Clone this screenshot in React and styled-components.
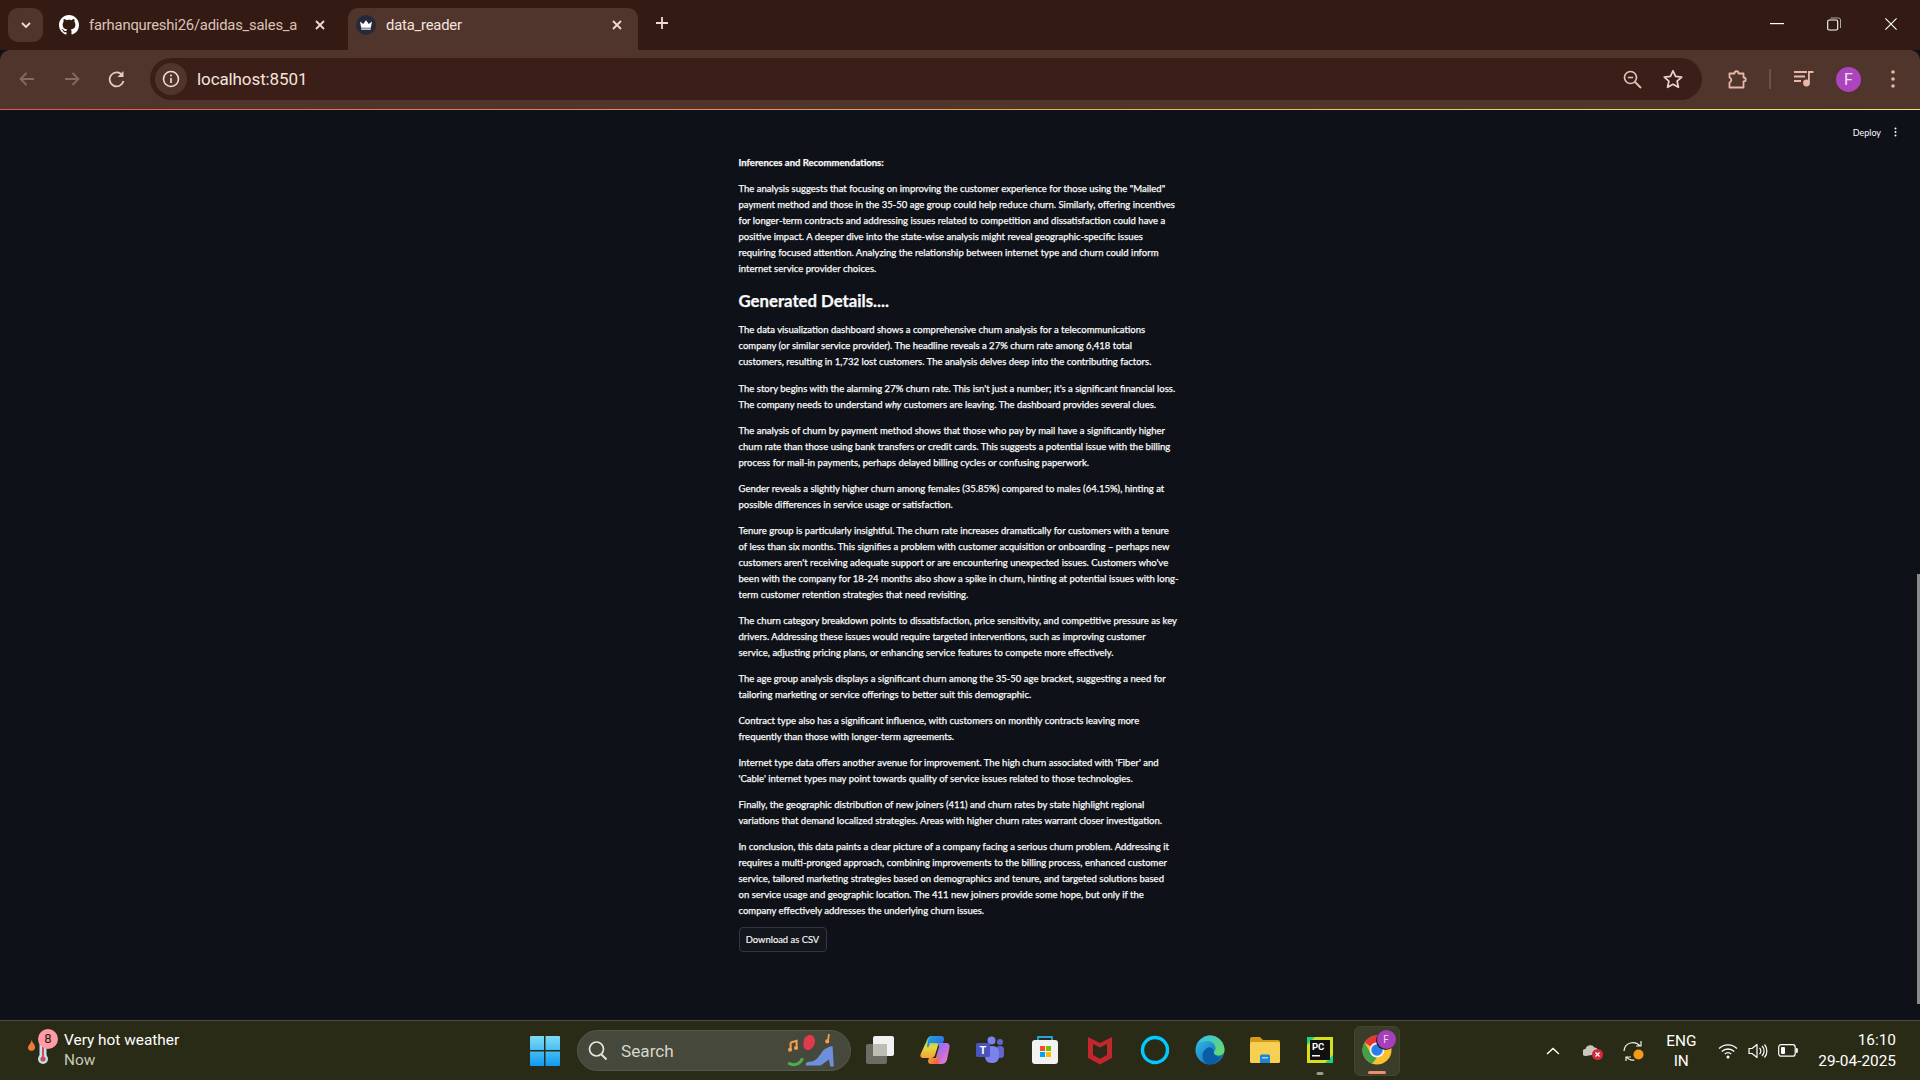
import React from "react";
import styled, { createGlobalStyle } from "styled-components";

const Global = createGlobalStyle`
  html, body { margin: 0; padding: 0; background: #0e1117; overflow: hidden; }
  * { box-sizing: border-box; }
`;

const UI = `"Open Sans", "Noto Sans", Arial, sans-serif`;
const SEG = `"Open Sans", "Noto Sans", sans-serif`;

const Screen = styled.div`
  width: 1920px; height: 1080px; display: flex; flex-direction: column;
  position: relative; overflow: hidden; font-family: ${UI};
`;
const TabStrip = styled.div`
  height: 50px; background: #331a13; display: flex; align-items: flex-start; padding: 8px 0 0 8px; flex: none;
`;
const TabSearch = styled.div`
  width: 35px; height: 34px; border-radius: 10px; background: #50352d; display: flex; align-items: center; justify-content: center; margin-right: 5px;
`;
const Tab = styled.div`
  width: ${p => p.$w}px; height: 42px; display: flex; align-items: center; gap: 10px; padding: 0 0 8px ${p => p.$pl}px;
  border-radius: 10px 10px 0 0; background: ${p => p.$active ? "#50352d" : "transparent"};
  color: ${p => p.$active ? "#f3e4de" : "#dcc3ba"}; position: relative; letter-spacing: -0.2px;
`;
const TabLabel = styled.span`
  flex: 1; white-space: nowrap; font-family: "Roboto", sans-serif; font-size: 14.8px; margin-right: 4px;
`;
const TabClose = styled.span`
  width: 14px; height: 14px; margin-right: ${p => p.$mr}px; display: flex; align-items: center; justify-content: center; flex: none;
`;
const NewTab = styled.div`
  width: 20px; height: 20px; margin: 7px 0 0 16px; display: flex;
`;
const WindowControls = styled.div`
  margin-left: auto; display: flex; align-items: center; gap: 43px; padding: 9px 22px 0 0;
`;
const Toolbar = styled.div`
  height: 59px; background: #50352d; border-radius: 10px 10px 0 0; display: flex; align-items: center; flex: none; padding: 0 0 1px 17px;
`;
const NavIcon = styled.div`
  width: 20px; height: 20px; margin-right: ${p => p.$mr}px; display: flex;
`;
const Omnibox = styled.div`
  width: 1552px; height: 42px; background: #3a1e17; border-radius: 21px; display: flex; align-items: center; padding: 0 0 0 5px;
`;
const InfoBubble = styled.div`
  width: 32px; height: 32px; border-radius: 50%; background: #50352d; display: flex; align-items: center; justify-content: center; margin-right: 10px;
`;
const Url = styled.div`
  flex: 1; color: #f3e4de; font-family: "Roboto", sans-serif; font-size: 17px; letter-spacing: -0.1px;
`;
const OmniIcons = styled.div`
  display: flex; align-items: center; gap: 20px; padding-right: 18px;
`;
const ToolRight = styled.div`
  display: flex; align-items: center; margin-left: 23.5px;
`;
const ToolSep = styled.div`
  width: 2px; height: 20px; background: #6d4f46; margin: 0 23px 0 21.5px;
`;
const Avatar = styled.div`
  width: 25px; height: 25px; border-radius: 50%; background: #ac44bd; color: #f2e0f4; font-size: 16px; display: flex; align-items: center; justify-content: center; margin: 0 30px 0 22px; font-family: "Roboto", sans-serif;
`;
const Gradient = styled.div`
  height: 1px; flex: none; background: linear-gradient(90deg, #e2574c 0%, #e88a55 35%, #eec170 70%, #f3dc85 100%);
`;
const Page = styled.main`
  flex: 1; background: #0e1117; color: #fafafa; display: flex; justify-content: center; padding: 45.1px 3px 0 0; position: relative; min-height: 0;
`;
const Column = styled.article`
  width: 440px; font-family: "Lato", sans-serif; font-size: 9.52px; line-height: 16px; -webkit-text-stroke: 0.25px #fafafa;
`;
const P = styled.p`
  margin: 0 0 10.1px; white-space: nowrap;
`;
const H3 = styled.h3`
  margin: 9px 0 7.2px; font-size: 16.75px; line-height: 28px; font-weight: 700; font-family: "Lato", sans-serif;
`;
const Download = styled.button`
  display: block; width: 88px; height: 25px; margin-top: -3px; padding: 0; background: #13161d; border: 1px solid #33363f; border-radius: 4px; color: #fafafa; font-family: "Lato", sans-serif; font-size: 9.4px; -webkit-text-stroke: 0.15px #fafafa;
`;
const Header = styled.div`
  position: absolute; top: 14px; right: 23px; display: flex; align-items: center; gap: 13px; font-family: "Lato", sans-serif; font-size: 9px; color: #fafafa; height: 16px;
`;
const Thumb = styled.div`
  position: absolute; right: 0; top: 464px; width: 3px; height: 430px; background: #8a8a8a;
`;
const Taskbar = styled.footer`
  height: 60px; flex: none; background: #2a2b17; border-top: 1px solid #4b4d3c; display: flex; align-items: center; position: relative; font-family: ${SEG};
`;
const Weather = styled.div`
  display: flex; align-items: center; width: 525px; padding-left: 25px; gap: 2px; color: #fff;
`;
const WeatherIcon = styled.div`
  width: 36px; height: 44px; position: relative; flex: none;
`;
const Badge = styled.span`
  position: absolute; left: 13px; top: 0; width: 20px; height: 20px; border-radius: 50%; background: #ff9aa6; color: #1b1b1b; font-size: 13px; display: flex; align-items: center; justify-content: center; font-family: "Roboto", sans-serif;
`;
const WeatherText = styled.div`
  display: flex; flex-direction: column; font-size: 15.4px; line-height: 20px; font-family: "Roboto", sans-serif; margin: -2px 0 0 1px; white-space: nowrap;
`;
const WeatherSub = styled.span`
  color: #c9cabb;
`;
const WinStart = styled.div`
  width: 45px; display: flex; justify-content: center; margin-right: 10px; margin-left: -3px;
`;
const SearchBox = styled.div`
  width: 274px; height: 41px; border-radius: 21px; background: #45483a; border: 1px solid #55574a; display: flex; align-items: center; padding: 0 11px 0 9px; margin-right: 1.5px; color: #d6d7cb; font-family: "Roboto", sans-serif; font-size: 17.2px;
`;
const SearchLabel = styled.span`
  margin-left: 12px; flex: 1;
`;
const AppSlot = styled.div`
  height: 50px; display: flex; align-items: center; justify-content: center; position: relative; border-radius: 6px; padding-bottom: 2px;
  background: ${p => p.$on ? "#3b3d2b" : "transparent"}; border: ${p => p.$on ? "1px solid #43452f" : "none"};
  width: ${p => p.$on ? 46 : 55}px; margin-left: ${p => p.$on ? 6 : 0}px;
`;
const RunDot = styled.span`
  position: absolute; bottom: 1px; left: 50%; transform: translateX(-50%); height: 3px; border-radius: 2px;
  width: ${p => p.$w}px; background: ${p => p.$c};
`;
const Tray = styled.div`
  margin-left: auto; display: flex; align-items: center; padding-right: 24px; color: #fff;
`;
const TrayItem = styled.div`
  display: flex; align-items: center; justify-content: center; margin-left: ${p => p.$ml}px; width: ${p => p.$w}px;
`;
const Lang = styled.div`
  text-align: center; font-size: 15.4px; line-height: 20px; font-family: "Roboto", sans-serif; width: 38px; margin-left: 17.6px;
`;
const Clock = styled.div`
  text-align: right; font-size: 15.4px; line-height: 21px; font-family: "Roboto", sans-serif; margin-left: 20px; white-space: nowrap;
`;
const ProfileBadge = styled.span`
  position: absolute; right: 3px; top: 3px; width: 19px; height: 19px; border-radius: 50%; background: #a640ba; color: #f0d8f3; font-size: 10px; display: flex; align-items: center; justify-content: center; box-shadow: -1px 1px 0 #222; font-family: "Roboto", sans-serif;
`;

const Svg = ({ s = 20, children }) => (
  <svg width={s} height={s} viewBox={`0 0 ${s} ${s}`} fill="none">{children}</svg>
);

const GitHub = () => (
  <svg width="20" height="20" viewBox="0 0 16 16" fill="#fff"><path d="M8 0C3.58 0 0 3.58 0 8c0 3.54 2.29 6.53 5.47 7.59.4.07.55-.17.55-.38 0-.19-.01-.82-.01-1.49-2.01.37-2.53-.49-2.69-.94-.09-.23-.48-.94-.82-1.13-.28-.15-.68-.52-.01-.53.63-.01 1.08.58 1.23.82.72 1.21 1.87.87 2.33.66.07-.52.28-.87.51-1.07-1.78-.2-3.64-.89-3.64-3.95 0-.87.31-1.59.82-2.15-.08-.2-.36-1.02.08-2.12 0 0 .67-.21 2.2.82.64-.18 1.32-.27 2-.27s1.36.09 2 .27c1.53-1.04 2.2-.82 2.2-.82.44 1.1.16 1.92.08 2.12.51.56.82 1.27.82 2.15 0 3.07-1.87 3.75-3.65 3.95.29.25.54.73.54 1.48 0 1.07-.01 1.93-.01 2.2 0 .21.15.46.55.38A8.01 8.01 0 0016 8c0-4.42-3.58-8-8-8z"/></svg>
);
const Crown = () => (
  <Svg s={20}><circle cx="10" cy="10" r="10" fill="#262a38"/><path d="M4 6.5l3.2 2.4L10 5.2l2.800 3.700L16 6.500l-1.200 6.300H5.200z" fill="#fff"/><rect x="5.200" y="13.400" width="9.600" height="1.400" fill="#ddd"/></Svg>
);
const X = ({ c = "#f0dcd5", s = 10, sw = 1.8 }) => (
  <svg width={s} height={s} viewBox="0 0 10 10"><path d="M1 1l8 8M9 1l-8 8" stroke={c} strokeWidth={sw}/></svg>
);

const Streamlit = () => (
  <Page>
    <Column>
      <P><strong>Inferences and Recommendations:</strong></P>
      <P>The analysis suggests that focusing on improving the customer experience for those using the "Mailed"<br/>payment method and those in the 35-50 age group could help reduce churn. Similarly, offering incentives<br/>for longer-term contracts and addressing issues related to competition and dissatisfaction could have a<br/>positive impact. A deeper dive into the state-wise analysis might reveal geographic-specific issues<br/>requiring focused attention. Analyzing the relationship between internet type and churn could inform<br/>internet service provider choices.</P>
      <H3>Generated Details....</H3>
      <P>The data visualization dashboard shows a comprehensive churn analysis for a telecommunications<br/>company (or similar service provider). The headline reveals a 27% churn rate among 6,418 total<br/>customers, resulting in 1,732 lost customers. The analysis delves deep into the contributing factors.</P>
      <P>The story begins with the alarming 27% churn rate. This isn't just a number; it's a significant financial loss.<br/>The company needs to understand <em>why</em> customers are leaving. The dashboard provides several clues.</P>
      <P>The analysis of churn by payment method shows that those who pay by mail have a significantly higher<br/>churn rate than those using bank transfers or credit cards. This suggests a potential issue with the billing<br/>process for mail-in payments, perhaps delayed billing cycles or confusing paperwork.</P>
      <P>Gender reveals a slightly higher churn among females (35.85%) compared to males (64.15%), hinting at<br/>possible differences in service usage or satisfaction.</P>
      <P>Tenure group is particularly insightful. The churn rate increases dramatically for customers with a tenure<br/>of less than six months. This signifies a problem with customer acquisition or onboarding – perhaps new<br/>customers aren't receiving adequate support or are encountering unexpected issues. Customers who've<br/>been with the company for 18-24 months also show a spike in churn, hinting at potential issues with long-<br/>term customer retention strategies that need revisiting.</P>
      <P>The churn category breakdown points to dissatisfaction, price sensitivity, and competitive pressure as key<br/>drivers. Addressing these issues would require targeted interventions, such as improving customer<br/>service, adjusting pricing plans, or enhancing service features to compete more effectively.</P>
      <P>The age group analysis displays a significant churn among the 35-50 age bracket, suggesting a need for<br/>tailoring marketing or service offerings to better suit this demographic.</P>
      <P>Contract type also has a significant influence, with customers on monthly contracts leaving more<br/>frequently than those with longer-term agreements.</P>
      <P>Internet type data offers another avenue for improvement. The high churn associated with 'Fiber' and<br/>'Cable' internet types may point towards quality of service issues related to those technologies.</P>
      <P>Finally, the geographic distribution of new joiners (411) and churn rates by state highlight regional<br/>variations that demand localized strategies. Areas with higher churn rates warrant closer investigation.</P>
      <P>In conclusion, this data paints a clear picture of a company facing a serious churn problem. Addressing it<br/>requires a multi-pronged approach, combining improvements to the billing process, enhanced customer<br/>service, tailored marketing strategies based on demographics and tenure, and targeted solutions based<br/>on service usage and geographic location. The 411 new joiners provide some hope, but only if the<br/>company effectively addresses the underlying churn issues.</P>
      <Download>Download as CSV</Download>
    </Column>
    <Header>
      <span>Deploy</span>
      <svg width="3" height="10" viewBox="0 0 3 10" fill="#fafafa"><circle cx="1.5" cy="1.5" r="1"/><circle cx="1.5" cy="5" r="1"/><circle cx="1.5" cy="8.5" r="1"/></svg>
    </Header>
    <Thumb />
  </Page>
);

const Chrome = () => (
  <>
    <TabStrip>
      <TabSearch>
        <svg width="10" height="7" viewBox="0 0 10 7"><path d="M1 1l4 4 4-4" stroke="#f0dcd5" strokeWidth="1.8" fill="none"/></svg>
      </TabSearch>
      <Tab $w={300} $pl={11}>
        <GitHub />
        <TabLabel>farhanqureshi26/adidas_sales_a</TabLabel>
        <TabClose $mr={21}><X /></TabClose>
      </Tab>
      <Tab $active $w={290} $pl={8}>
        <Crown />
        <TabLabel>data_reader</TabLabel>
        <TabClose $mr={14}><X /></TabClose>
      </Tab>
      <NewTab>
        <svg width="16" height="16" viewBox="0 0 16 16"><path d="M8 2v12M2 8h12" stroke="#f0dcd5" strokeWidth="1.8"/></svg>
      </NewTab>
      <WindowControls>
        <svg width="14" height="2" viewBox="0 0 14 2"><rect width="14" height="1.2" fill="#fff"/></svg>
        <svg width="14" height="14" viewBox="0 0 14 14" fill="none"><rect x=".7" y="3" width="10" height="10" rx="1.5" stroke="#fff" strokeWidth="1.1"/><path d="M3.5 1h8a2 2 0 012 2v8" stroke="#aaa" strokeWidth="1"/></svg>
        <X c="#fff" s={14} sw={0.8} />
      </WindowControls>
    </TabStrip>
    <Toolbar>
      <NavIcon $mr={25}>
        <svg width="20" height="20" viewBox="0 0 20 20" fill="none"><path d="M17 10H4M9.5 4L3.5 10l6 6" stroke="#846a61" strokeWidth="1.8"/></svg>
      </NavIcon>
      <NavIcon $mr={25}>
        <svg width="20" height="20" viewBox="0 0 20 20" fill="none"><path d="M3 10h13M10.5 4l6 6-6 6" stroke="#846a61" strokeWidth="1.8"/></svg>
      </NavIcon>
      <NavIcon $mr={23}>
        <svg width="20" height="20" viewBox="0 0 20 20" fill="none"><path d="M15.5 6.5A7 7 0 1016.5 12" stroke="#e8c9bd" strokeWidth="1.8"/><path d="M16.5 2v6h-6z" fill="#e8c9bd"/></svg>
      </NavIcon>
      <Omnibox>
        <InfoBubble>
          <svg width="18" height="18" viewBox="0 0 18 18" fill="none"><circle cx="9" cy="9" r="7.5" stroke="#f0dcd5" strokeWidth="1.6"/><path d="M9 8v5" stroke="#f0dcd5" strokeWidth="1.7"/><circle cx="9" cy="5.5" r="1" fill="#f0dcd5"/></svg>
        </InfoBubble>
        <Url>localhost:8501</Url>
        <OmniIcons>
          <svg width="19" height="19" viewBox="0 0 19 19" fill="none"><circle cx="7.5" cy="7.5" r="6" stroke="#dcc3ba" strokeWidth="1.7"/><path d="M12 12l6 6" stroke="#dcc3ba" strokeWidth="1.9"/><path d="M4.8 7.5h5.4" stroke="#dcc3ba" strokeWidth="1.6"/></svg>
          <svg width="22" height="22" viewBox="0 0 24 24" fill="none"><path d="M12 3l2.8 6.2 6.7.7-5 4.5 1.4 6.600L12 17.600 6.100 21l1.400-6.600-5-4.500 6.700-.7z" stroke="#e8d3cb" strokeWidth="1.900" strokeLinejoin="round"/></svg>
        </OmniIcons>
      </Omnibox>
      <ToolRight>
        <svg width="22" height="22" viewBox="0 0 22 22" fill="none"><path d="M3.500 5.500H8.500C8.500 2.500 12.500 2.500 12.500 5.500H17.500V9.500C20.500 9.500 20.500 13.500 17.500 13.500V19.500H3.500V14.500C6 13.500 6 10.500 3.500 9.500Z" stroke="#e8b7a8" strokeWidth="1.800" strokeLinejoin="round"/></svg>
        <ToolSep />
        <svg width="20" height="18" viewBox="0 0 20 18" fill="#e8b7a8"><rect x="0" y="1" width="13" height="2"/><rect x="0" y="5.500" width="11" height="2"/><rect x="0" y="10" width="7" height="2"/><rect x="14" y="1" width="1.800" height="12"/><rect x="14" y="1" width="5.500" height="2"/><circle cx="12.500" cy="13" r="3.400"/></svg>
        <Avatar>F</Avatar>
        <svg width="4" height="18" viewBox="0 0 4 18" fill="#e8b7a8"><circle cx="2" cy="2" r="1.800"/><circle cx="2" cy="9" r="1.800"/><circle cx="2" cy="16" r="1.800"/></svg>
      </ToolRight>
    </Toolbar>
    <Gradient />
  </>
);

const TaskView = () => (
  <svg width="30" height="30" viewBox="0 0 30 30"><rect x="1" y="9" width="21" height="20" rx="2" fill="#6c6c64"/><rect x="8" y="1" width="21" height="20" rx="2" fill="#f1f1f1"/><rect x="8" y="9" width="14" height="12" fill="#bdbdb6"/></svg>
);
const Copilot = () => (
  <svg width="30" height="30" viewBox="0 0 30 30">
    <defs>
      <linearGradient id="cpa" x1="0" y1="0" x2="1" y2="1"><stop offset="0" stopColor="#1fa5e8"/><stop offset="1" stopColor="#2f5fd8"/></linearGradient>
      <linearGradient id="cpb" x1="0" y1="0" x2="0" y2="1"><stop offset="0" stopColor="#3bc9a0"/><stop offset=".5" stopColor="#e6d93a"/><stop offset="1" stopColor="#f3a03a"/></linearGradient>
      <linearGradient id="cpc" x1="0" y1="0" x2="1" y2="1"><stop offset="0" stopColor="#6a7cf0"/><stop offset=".55" stopColor="#c66ae0"/><stop offset="1" stopColor="#f08ab0"/></linearGradient>
      <linearGradient id="cpd" x1="0" y1="0" x2="1" y2="1"><stop offset="0" stopColor="#f0c03a"/><stop offset="1" stopColor="#f0503a"/></linearGradient>
    </defs>
    <path d="M7 5c.7-2.500 2.500-4 5-4h9L15 20c-.7 2-2 3-4 3H3c-2 0-3-1.500-2.500-3.500z" fill="url(#cpb)"/>
    <path d="M12 1h9c2.500 0 3.500 2 3 4l-1 3H10L8 13l-1-2 1-5c.5-3 2-5 4-5z" fill="url(#cpa)"/>
    <path d="M16 8h10c3 0 4 2 3.500 4.500l-2.500 12c-.6 3-3 4.500-5.500 4.500H14l5-17c.4-1.500-1-3-3-4.500z" fill="url(#cpc)"/>
    <path d="M9 23h6c2 0 3.500-1 4-3l1-3-2 12h-7c-2 0-3-1-3-3z" fill="url(#cpd)"/>
  </svg>
);
const Teams = () => (
  <svg width="28" height="28" viewBox="0 0 28 28">
    <circle cx="24" cy="6" r="3" fill="#6264c9"/><rect x="20" y="10" width="8" height="12" rx="3.500" fill="#6264c9"/>
    <circle cx="15.500" cy="4.500" r="4" fill="#7b83eb"/><rect x="9" y="10" width="14" height="17" rx="6" fill="#7b83eb"/>
    <rect x="0" y="7" width="14" height="14" rx="1.500" fill="#4b53bc"/>
    <text x="7" y="18" fontSize="11" fontFamily="Roboto, sans-serif" fontWeight="700" fill="#fff" textAnchor="middle">T</text>
  </svg>
);
const Store = () => (
  <svg width="28" height="30" viewBox="0 0 28 30">
    <path d="M7 5V2h14v3" stroke="#22a6e0" strokeWidth="1.800" fill="none"/>
    <rect x="1" y="5" width="26" height="24" rx="3" fill="#f2f2f2"/>
    <rect x="9" y="11" width="5" height="5" fill="#f25022"/><rect x="15" y="11" width="5" height="5" fill="#7fba00"/><rect x="9" y="17" width="5" height="5" fill="#00a4ef"/><rect x="15" y="17" width="5" height="5" fill="#ffb900"/>
  </svg>
);
const McAfee = () => (
  <svg width="26" height="30" viewBox="0 0 26 30"><path d="M1 2l12 6 12-6v21l-12 6.500-12-6.500z M6 9v11l7 3.800 7-3.800V9l-7 3.500z" fill="#c1272d" fillRule="evenodd"/></svg>
);
const Alexa = () => (
  <svg width="30" height="30" viewBox="0 0 30 30" fill="none"><circle cx="15" cy="15" r="12.500" stroke="#00caff" strokeWidth="3.400"/><path d="M9.500 26.500l3.500 3 1-4z" fill="#00caff"/></svg>
);
const Edge = () => (
  <svg width="30" height="30" viewBox="0 0 30 30">
    <defs><linearGradient id="eda" x1="0" y1="0" x2="1" y2="1"><stop offset="0" stopColor="#35c1f1"/><stop offset="1" stopColor="#0c59a4"/></linearGradient><linearGradient id="edb" x1="0" y1="0" x2="1" y2="1"><stop offset="0" stopColor="#33bfe8"/><stop offset="1" stopColor="#6fdc5a"/></linearGradient></defs>
    <circle cx="15" cy="15" r="14.500" fill="url(#eda)"/>
    <path d="M3 9C6 3 11 .5 15 .5 24 .5 29.500 8 29.500 15c0 3-2 5.500-6 5.500-3 0-5-1-5-2.500 0-1.500 2-2 2-5 0-4-4-7-8-7-4 0-7 1-9.500 3z" fill="url(#edb)"/>
    <path d="M12 13c3-2 6.500 0 6.500 3 0 3 3 6 7 6-2.500 5-7 7.500-10.500 7.500-5 0-7.500-5-7.500-9 0-3 2-6 4.500-7.500z" fill="#0a5ba8"/>
  </svg>
);
const Folder = () => (
  <svg width="30" height="28" viewBox="0 0 30 28">
    <path d="M0 3a2 2 0 012-2h8l3 3h15a2 2 0 012 2v4H0z" fill="#d19c18"/>
    <rect x="0" y="6" width="30" height="21" rx="1.500" fill="#f7cf53"/>
    <path d="M10 20a1.500 1.500 0 011.500-1.500h7A1.500 1.500 0 0120 20v7H10z" fill="#1b86d1"/>
    <rect x="12" y="21" width="6" height="1.500" fill="#9ed0f0"/>
  </svg>
);
const PyCharm = () => (
  <svg width="26" height="26" viewBox="0 0 26 26">
    <rect x="0" y="0" width="26" height="26" fill="#d4e020"/>
    <path d="M0 0h8l-8 8zM26 26h-8l8-8z" fill="#1fd08a"/>
    <rect x="3" y="3" width="20" height="20" fill="#101010"/>
    <text x="5" y="13" fontSize="9.500" fontFamily="Roboto, sans-serif" fontWeight="700" fill="#fff">PC</text>
    <rect x="5" y="18" width="8" height="1.500" fill="#fff"/>
  </svg>
);
const ChromeLogo = () => (
  <svg width="30" height="30" viewBox="0 0 30 30">
    <circle cx="15" cy="15" r="14.500" fill="#fbc02d"/>
    <path d="M15 .5a14.500 14.500 0 0112.600 7.300H15a7.200 7.200 0 00-6.300 3.700L2.500 7.500A14.500 14.500 0 0115 .5z" fill="#e53935"/>
    <path d="M2.500 7.500l6.300 11a7.200 7.200 0 006.200 3.700l-4.800 6.500A14.500 14.500 0 012.500 7.500z" fill="#43a047"/>
    <circle cx="15" cy="15" r="7.400" fill="#f4f4f4"/><circle cx="15" cy="15" r="5.700" fill="#2b7de9"/>
  </svg>
);

const Taskbr = () => (
  <Taskbar>
    <Weather>
      <WeatherIcon>
        <svg width="36" height="44" viewBox="0 0 36 44">
          <path d="M4 16c2-2 2-4 3-5 0 3 3 4 3 7a3.500 3.500 0 01-7 .500c0-1 .500-1.800 1-2.500z" fill="#ef7a35"/>
          <rect x="14.500" y="12" width="7" height="18" rx="3.500" fill="#bfe1f0"/>
          <circle cx="18" cy="30" r="5" fill="#bfe1f0"/>
          <rect x="17" y="18" width="2" height="12" fill="#d84a4a"/>
          <circle cx="18" cy="30" r="2.600" fill="#d84a4a"/>
        </svg>
        <Badge>8</Badge>
      </WeatherIcon>
      <WeatherText>
        <span>Very hot weather</span>
        <WeatherSub>Now</WeatherSub>
      </WeatherText>
    </Weather>
    <WinStart>
      <svg width="30" height="30" viewBox="0 0 30 30">
        <defs><linearGradient id="win" x1="0" y1="0" x2="0" y2="1"><stop offset="0" stopColor="#7cdcf5"/><stop offset="1" stopColor="#0f9bf0"/></linearGradient></defs>
        <path d="M0 1a1 1 0 011-1h13v14H0zM15.500 0H29a1 1 0 011 1v13H15.500zM0 15.500h14V30H1a1 1 0 01-1-1zM15.500 15.500H30V29a1 1 0 01-1 1H15.500z" fill="url(#win)"/>
      </svg>
    </WinStart>
    <SearchBox>
      <svg width="22" height="22" viewBox="0 0 22 22" fill="none"><circle cx="9.500" cy="9" r="7" stroke="#e6e7dd" strokeWidth="1.700"/><path d="M14.500 14.500l5 5" stroke="#e6e7dd" strokeWidth="2"/></svg>
      <SearchLabel>Search</SearchLabel>
      <svg width="56" height="36" viewBox="0 0 40 30">
        <path d="M3 8l5-1.500v6M3 8v6" stroke="#f0a050" strokeWidth="1.700" fill="none"/><circle cx="2.500" cy="14" r="1.700" fill="#f0a050"/><circle cx="7.500" cy="12.500" r="1.700" fill="#f0a050"/>
        <path d="M1 25c5 3 10 1 12-4" stroke="#4cae4c" strokeWidth="2.500" fill="none"/>
        <path d="M14 7c0-4 4-6 7-5 3 2 3 6 1 9-2 3-4 4-6 3-2-1-3-4-2-7z" fill="#e03a4e"/>
        <path d="M35 1l-1 6" stroke="#f0a050" strokeWidth="1.500"/><circle cx="33.500" cy="7" r="1.700" fill="#f0a050"/>
        <path d="M38 11l1 17h-3l-1-6-7 5H16c-1-2 1-3 3-3 5 0 8-5 10-8 2-3 6-5 9-5z" fill="#6d8fdc"/>
      </svg>
    </SearchBox>
    <AppSlot><TaskView /></AppSlot>
    <AppSlot><Copilot /></AppSlot>
    <AppSlot><Teams /></AppSlot>
    <AppSlot><Store /></AppSlot>
    <AppSlot><McAfee /></AppSlot>
    <AppSlot><Alexa /></AppSlot>
    <AppSlot><Edge /></AppSlot>
    <AppSlot><Folder /></AppSlot>
    <AppSlot><PyCharm /><RunDot $w={7} $c="#9a9b90" /></AppSlot>
    <AppSlot $on><ChromeLogo /><ProfileBadge>F</ProfileBadge><RunDot $w={18} $c="#f28b75" /></AppSlot>
    <Tray>
      <TrayItem $ml={0} $w={16}>
        <svg width="14" height="8" viewBox="0 0 14 8" fill="none"><path d="M1 7l6-5.500L13 7" stroke="#fff" strokeWidth="1.500"/></svg>
      </TrayItem>
      <TrayItem $ml={21.6} $w={20}>
        <svg width="20" height="18" viewBox="0 0 20 18"><path d="M3 14a3.500 3.500 0 01-.500-7 5 5 0 019-1.500 4 4 0 013 6.500z" fill="#c8c8c0"/><circle cx="14.500" cy="12.500" r="5.500" fill="#d8283c"/><path d="M12.500 10.500l4 4M16.500 10.500l-4 4" stroke="#fff" strokeWidth="1.200"/></svg>
      </TrayItem>
      <TrayItem $ml={19.8} $w={22}>
        <svg width="22" height="22" viewBox="0 0 22 22" fill="none"><path d="M1 11a9 9 0 0116-5M18 1v5h-5" stroke="#f0f0e8" strokeWidth="1.200"/><path d="M3 21v-4h5M3.500 17a8 8 0 008 3" stroke="#f0f0e8" strokeWidth="1.200"/><circle cx="15.500" cy="14.500" r="5" fill="#f99a16"/></svg>
      </TrayItem>
      <Lang>ENG<br/>IN</Lang>
      <TrayItem $ml={18} $w={20}>
        <svg width="20" height="16" viewBox="0 0 20 16" fill="none"><path d="M1 5.500a13 13 0 0118 0M3.800 8.500a9 9 0 0112.400 0M6.800 11a5 5 0 016.400 0" stroke="#fff" strokeWidth="1.300"/><circle cx="10" cy="14" r="1.500" fill="#fff"/></svg>
      </TrayItem>
      <TrayItem $ml={10} $w={20}>
        <svg width="20" height="16" viewBox="0 0 20 16" fill="none"><path d="M1 5.500h3L9 1.500v13l-5-4H1z" stroke="#fff" strokeWidth="1.200" strokeLinejoin="round"/><path d="M11.500 5a4 4 0 010 6M14 3a7 7 0 010 10M16.500 1.500a10 10 0 010 13" stroke="#fff" strokeWidth="1.200"/></svg>
      </TrayItem>
      <TrayItem $ml={10} $w={20}>
        <svg width="20" height="13" viewBox="0 0 20 13" fill="none"><rect x=".7" y=".7" width="16.500" height="11.500" rx="2.500" stroke="#fff" strokeWidth="1.200"/><rect x="3" y="3" width="4" height="7" rx="1" fill="#fff"/><rect x="18" y="4" width="1.800" height="5" rx=".9" fill="#fff"/></svg>
      </TrayItem>
      <Clock>16:10<br/>29-04-2025</Clock>
    </Tray>
  </Taskbar>
);

export default function App() {
  return (
    <Screen>
      <Global />
      <Chrome />
      <Streamlit />
      <Taskbr />
    </Screen>
  );
}
